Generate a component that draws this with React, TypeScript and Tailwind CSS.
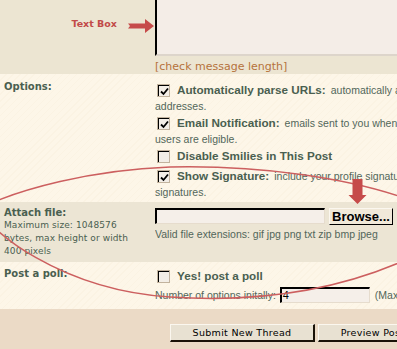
import React from 'react';

const labelCls = "font-['DejaVu_Sans',Verdana,sans-serif] font-bold text-[10px] leading-[12px] text-[#4a5f50]";
const textCls = "text-[10.5px] leading-[13px] text-[#52665a]";

function Check({ checked }: { checked?: boolean }) {
  return (
    <span className="ml-[2px] flex h-[13px] w-[13px] shrink-0 border border-[#c2b39e]">
      <span className="relative flex-1 border-l border-t border-black bg-[#f3eee7]">
        {checked && (
          <svg className="absolute left-[1px] top-[1px]" width="9" height="9" viewBox="0 0 9 9">
            <path d="M1 4.5 L3.5 7 L8 1.5" fill="none" stroke="#000" strokeWidth="1.8" />
          </svg>
        )}
      </span>
    </span>
  );
}

function Option({ checked, title, text }: { checked?: boolean; title: string; text?: string }) {
  return (
    <div className="flex h-[20px] items-center whitespace-nowrap">
      <Check checked={checked} />
      <span className="ml-[7px] text-[11.7px] font-bold text-[#4a5f50]">{title}</span>
      {text && <span className={`ml-[5px] ${textCls}`}>{text}</span>}
    </div>
  );
}

function Field({ value, className }: { value?: string; className: string }) {
  return (
    <div className={`h-[16px] shrink-0 border-l-2 border-t-2 border-l-black border-t-black border-r border-b border-r-[#e6dccd] border-b-[#e6dccd] bg-[#f5efe9] pl-[1px] text-[11px] leading-[12px] text-black ${className}`}>
      {value}
    </div>
  );
}

function Button({ children, className }: { children: React.ReactNode; className: string }) {
  return (
    <button className={`h-[18px] shrink-0 border-l border-t border-[#fbf7ef] border-b-2 border-r-2 border-b-[#1a1208] border-r-[#1a1208] bg-[#e8e1d2] font-['DejaVu_Sans',Verdana,sans-serif] text-[9.5px] leading-[14px] tracking-[0.3px] text-black ${className}`}>
      {children}
    </button>
  );
}

export default function App() {
  return (
    <div className="relative h-[349px] w-[397px] overflow-hidden bg-[#fdf6e8] font-['Liberation_Sans',Arial,sans-serif]">
      {/* message box */}
      <div className="flex h-[74px] bg-[#ece5d2]">
        <div className="flex w-[155px] shrink-0 items-start justify-end gap-[10px] pr-[1px] pt-[18px]">
          <span className="font-['DejaVu_Sans',Verdana,sans-serif] text-[9.5px] font-bold leading-[12px] text-[#c24a48]">Text Box</span>
          <svg width="27" height="16" viewBox="0 0 27 16">
            <path d="M1 5.5 L18 5.5 L18 1 L27 8 L18 15 L18 10.5 L1 10.5 L3 8 Z" fill="#c64b4a" />
          </svg>
        </div>
        <div className="min-w-0 flex-1">
          <div className="h-[56px] border-b-2 border-l-2 border-b-[#ddd5cb] border-l-black bg-[#f4ede7]" />
          <div className="pt-[4px] font-['DejaVu_Sans',Verdana,sans-serif] text-[11px] leading-[14px] text-[#b5723c]">[check message length]</div>
        </div>
      </div>

      {/* options */}
      <div className="flex h-[128px] bg-[image:repeating-linear-gradient(135deg,#fdf6e8_0px,#fdf6e8_4px,#fbf3e3_4px,#fbf3e3_5px)]">
        <div className="w-[155px] shrink-0 pl-[4px] pt-[7px]">
          <div className={labelCls}>Options:</div>
        </div>
        <div className="min-w-0 flex-1 overflow-hidden pt-[6px]">
          <Option checked title="Automatically parse URLs:" text="automatically add [url] and [/url] around internet" />
          <div className={`whitespace-nowrap ${textCls}`}>addresses.</div>
          <Option checked title="Email Notification:" text="emails sent to you whenever someone replies. Only registered" />
          <div className={`whitespace-nowrap ${textCls}`}>users are eligible.</div>
          <Option title="Disable Smilies in This Post" />
          <Option checked title="Show Signature:" text="include your profile signature. Only registered users may have" />
          <div className={`whitespace-nowrap ${textCls}`}>signatures.</div>
        </div>
      </div>

      {/* attach */}
      <div className="flex h-[60px] bg-[#ece5d4]">
        <div className="w-[155px] shrink-0 pl-[4px] pt-[5px]">
          <div className={labelCls}>Attach file:</div>
          <div className="font-['DejaVu_Sans',Verdana,sans-serif] text-[9px] leading-[13px] tracking-[0.1px] text-[#4a5f50]">
            Maximum size: 1048576<br />bytes, max height or width<br />400 pixels
          </div>
        </div>
        <div className="min-w-0 flex-1 overflow-hidden pt-[6px]">
          <div className="flex items-start gap-[4px]">
            <Field className="w-[170px]" />
            <button className="h-[17px] w-[64px] shrink-0 border-l border-t border-[#fbf7ef] border-b border-r border-b-black border-r-black bg-[#f1e9d9] text-[13px] font-bold leading-[14px] text-black">Browse...</button>
          </div>
          <div className={`mt-[3px] whitespace-nowrap ${textCls}`}>Valid file extensions: gif jpg png txt zip bmp jpeg</div>
        </div>
      </div>

      {/* poll */}
      <div className="flex h-[47px] bg-[image:repeating-linear-gradient(135deg,#fdf6e8_0px,#fdf6e8_4px,#fbf3e3_4px,#fbf3e3_5px)]">
        <div className="w-[155px] shrink-0 pl-[4px] pt-[6px]">
          <div className={labelCls}>Post a poll:</div>
        </div>
        <div className="min-w-0 flex-1 overflow-hidden pt-[4px]">
          <Option title="Yes! post a poll" />
          <div className="flex h-[18px] items-center whitespace-nowrap">
            <span className={textCls}>Number of options initally:</span>
            <Field value="4" className="ml-[4px] w-[90px]" />
            <span className={`ml-[5px] ${textCls}`}>(Maximum 10)</span>
          </div>
        </div>
      </div>

      {/* submit */}
      <div className="flex h-[40px] gap-[3px] bg-[#ebdac6] pl-[170px] pt-[15px]">
        <Button className="w-[145px]">Submit New Thread</Button>
        <Button className="w-[110px]">Preview Post</Button>
      </div>

      {/* hand-drawn annotations */}
      <svg className="pointer-events-none absolute left-0 top-0" width="397" height="349" viewBox="0 0 397 349">
        <path d="M-20 208 C 20 189, 90 170, 170 167 C 260 165, 350 178, 410 200" fill="none" stroke="#cc5f5f" strokeWidth="1.5" />
        <path d="M-20 208 C -15 228, 60 290, 170 297 C 260 303, 340 290, 410 258" fill="none" stroke="#cc5f5f" strokeWidth="1.5" />
        <path d="M352.5 179 L362.5 179 L362.5 195 L366.5 195 L357.5 204 L348.5 195 L352.5 195 Z" fill="#c64b4a" />
      </svg>
    </div>
  );
}
